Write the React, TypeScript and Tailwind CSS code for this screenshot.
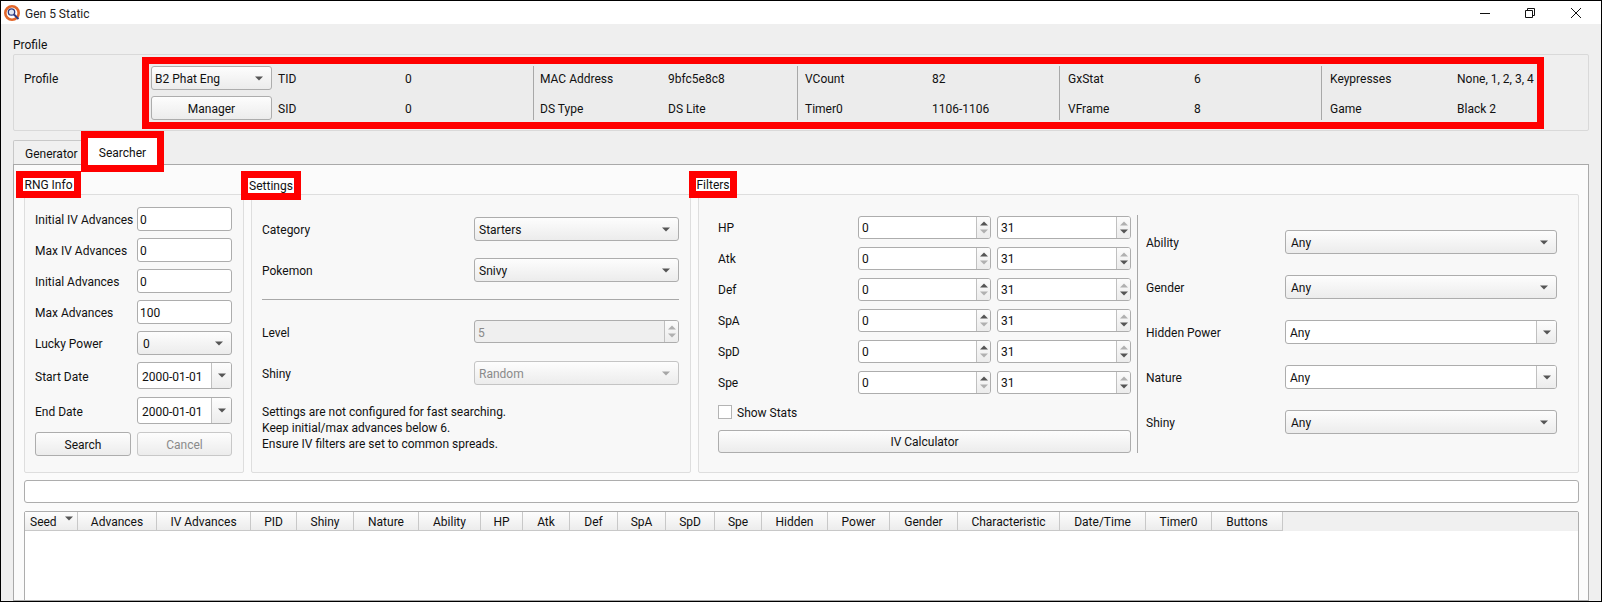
import React from "react";

const Tri = ({ c = "#555555" }: { c?: string }) => (
  <svg width="8" height="5" viewBox="0 0 8 5" className="shrink-0"><path d="M0 0.5h8L4 4.5z" fill={c} /></svg>
);

const Label = ({ children, w, flat }: { children: React.ReactNode; w: string; flat?: boolean }) => (
  <span className={`${w} shrink-0 whitespace-nowrap ${flat ? "" : "pt-[2px]"}`}>{children}</span>
);

function Combo({ value, w, h = "h-6", disabled, pad = "pl-[4px]" }: { value: string; w: string; h?: string; disabled?: boolean; pad?: string }) {
  return (
    <div className={`${w} ${h} shrink-0 flex items-center justify-between ${pad} pr-[8px] rounded-[3px] border border-[#adadad] bg-gradient-to-b from-[#fdfdfd] to-[#ececec] ${disabled ? "text-[#8a8a8a] border-[#c4c4c4]" : ""}`}>
      <span className="pt-[2px]">{value}</span>
      <Tri c={disabled ? "#a6a6a6" : "#555555"} />
    </div>
  );
}

function EditCombo({ value, w, h = "h-6", seg = "w-5" }: { value: string; w: string; h?: string; seg?: string }) {
  return (
    <div className={`${w} ${h} shrink-0 flex items-stretch rounded-[3px] border border-[#adadad] bg-white overflow-hidden`}>
      <span className="flex-1 flex items-center pl-[4px] pt-[2px]">{value}</span>
      <span className={`${seg} flex items-center justify-center border-l border-[#c0c0c0] bg-gradient-to-b from-[#fdfdfd] to-[#ececec]`}><Tri /></span>
    </div>
  );
}

function TextBox({ value }: { value: string }) {
  return (
    <div className="w-[95px] h-6 shrink-0 flex items-center pl-[2px] pt-[2px] rounded-[3px] border border-[#adadad] bg-white">{value}</div>
  );
}

function Btn({ children, w, h = "h-6 pt-[2px]", disabled }: { children: React.ReactNode; w: string; h?: string; disabled?: boolean }) {
  return (
    <div className={`${w} ${h} shrink-0 flex items-center justify-center rounded-[3px] border bg-gradient-to-b from-[#fdfdfd] to-[#ececec] ${disabled ? "text-[#8a8a8a] border-[#c8c8c8]" : "border-[#adadad]"}`}>
      {children}
    </div>
  );
}

function Spin({ value, w, up, down, disabled }: { value: string; w: string; up: string; down: string; disabled?: boolean }) {
  return (
    <div className={`${w} h-[23px] shrink-0 flex items-stretch rounded-[3px] border border-[#adadad] overflow-hidden ${disabled ? "bg-[#efefef] text-[#8a8a8a]" : "bg-white"}`}>
      <span className={`flex-1 flex items-center pl-[3px] ${disabled ? "pt-[2px]" : ""}`}>{value}</span>
      <span className="w-[14px] flex flex-col items-center justify-center gap-[3px] border-l border-[#c0c0c0] bg-gradient-to-b from-[#fbfbfb] to-[#ececec]">
        <svg width="8" height="5" viewBox="0 0 8 5"><path d="M0 4.5h8L4 0.5z" fill={up} /></svg>
        <svg width="8" height="5" viewBox="0 0 8 5"><path d="M0 0.5h8L4 4.5z" fill={down} /></svg>
      </span>
    </div>
  );
}

function Annot({ children, className }: { children: React.ReactNode; className: string }) {
  return (
    <span className={`absolute -top-[24px] border-[7px] border-[#ff0000] bg-white flex items-center justify-center whitespace-nowrap leading-none ${className}`}>
      {children}
    </span>
  );
}

function InfoCol({ rows, lw, vw, cls = "" }: { rows: [string, string][]; lw: string; vw: string; cls?: string }) {
  return (
    <div className={`flex flex-col gap-[6px] pt-[2px] shrink-0 ${cls}`}>
      {rows.map(([a, b]) => (
        <div key={a} className="h-6 flex items-center">
          <Label w={lw}>{a}</Label>
          <Label w={vw}>{b}</Label>
        </div>
      ))}
    </div>
  );
}

const Sep = () => <div className="w-px h-[54px] mt-[2px] shrink-0 bg-[#a8a8a8]" />;

const headers: [string, string][] = [
  ["Advances", "w-[79px]"], ["IV Advances", "w-[94px]"], ["PID", "w-[46px]"], ["Shiny", "w-[57px]"], ["Nature", "w-[65px]"],
  ["Ability", "w-[62px]"], ["HP", "w-[42px]"], ["Atk", "w-[47px]"], ["Def", "w-[48px]"], ["SpA", "w-[48px]"], ["SpD", "w-[49px]"],
  ["Spe", "w-[47px]"], ["Hidden", "w-[66px]"], ["Power", "w-[62px]"], ["Gender", "w-[68px]"], ["Characteristic", "w-[102px]"],
  ["Date/Time", "w-[86px]"], ["Timer0", "w-[66px]"], ["Buttons", "w-[71px]"],
];

const stats = ["HP", "Atk", "Def", "SpA", "SpD", "Spe"];
const D = "#555555";
const L = "#b0b0b0";
const ANY = "pl-[5px]";

export default function App() {
  return (
    <div className="w-[1602px] h-[602px] overflow-hidden border border-black bg-[#efefef] flex flex-col text-[12px] text-[#111111] font-['Roboto',sans-serif]">
      {/* title bar */}
      <div className="h-[23px] shrink-0 bg-white flex items-center">
        <svg width="18" height="18" viewBox="0 0 18 18" className="ml-[2px] shrink-0">
          <circle cx="9" cy="9" r="6.7" fill="none" stroke="#e2662a" strokeWidth="2.6" />
          <circle cx="8.5" cy="8" r="3.2" fill="#dfe6f2" stroke="#2d3a80" strokeWidth="1.3" />
          <path d="M11 10.5l4.5 4.5" stroke="#2d3a80" strokeWidth="2" />
        </svg>
        <span className="ml-[4px] pt-[2px] text-[#222222]">Gen 5 Static</span>
        <div className="ml-auto flex items-center">
          <svg width="12" height="12" viewBox="0 0 12 12" className="mr-[33px]"><path d="M1 6.5h10" stroke="#111111" /></svg>
          <svg width="12" height="12" viewBox="0 0 12 12" className="mr-[34px]"><path d="M1.5 3.5h7v7h-7zM3.5 3.5v-2h7v7h-2" fill="none" stroke="#111111" /></svg>
          <svg width="12" height="12" viewBox="0 0 12 12" className="mr-[19px]"><path d="M1 1l10 10M11 1L1 11" stroke="#111111" /></svg>
        </div>
      </div>

      <div className="flex-1 min-h-0 flex flex-col px-[12px]">
        <div className="h-[30px] shrink-0 flex items-center pt-[11px]">Profile</div>

        {/* profile group */}
        <div className="h-[77px] shrink-0 flex rounded-[2px] border border-[#d9d9d9]">
          <div className="w-[128px] shrink-0 pl-[10px] pt-[15px]">Profile</div>
          <div className="w-[1402px] h-[72px] mt-[2px] shrink-0 border-[7px] border-[#ff0000] flex bg-[#ececec]">
            <div className="w-[129px] pl-[2px] pt-[2px] flex flex-col gap-[6px] shrink-0">
              <Combo value="B2 Phat Eng" w="w-[121px]" pad="pl-[3px]" />
              <Btn w="w-[121px]">Manager</Btn>
            </div>
            <InfoCol rows={[["TID", "0"], ["SID", "0"]]} lw="w-[127px]" vw="w-[128px]" />
            <Sep />
            <InfoCol rows={[["MAC Address", "9bfc5e8c8"], ["DS Type", "DS Lite"]]} lw="w-[128px]" vw="w-[129px]" cls="pl-[6px]" />
            <Sep />
            <InfoCol rows={[["VCount", "82"], ["Timer0", "1106-1106"]]} lw="w-[127px]" vw="w-[127px]" cls="pl-[7px]" />
            <Sep />
            <InfoCol rows={[["GxStat", "6"], ["VFrame", "8"]]} lw="w-[126px]" vw="w-[127px]" cls="pl-[8px]" />
            <Sep />
            <InfoCol rows={[["Keypresses", "None, 1, 2, 3, 4"], ["Game", "Black 2"]]} lw="w-[127px]" vw="w-[80px]" cls="pl-[8px]" />
          </div>
        </div>

        {/* tabs */}
        <div className="h-[26px] mt-[7px] shrink-0 flex items-end relative z-10">
          <div className="w-[75px] h-6 flex items-center pl-[11px] pt-[2px] border border-b-0 border-[#c8c8c8] rounded-t-[2px] bg-[#f0f0f0]">Generator</div>
          <div className="relative w-[69px] h-[27px] -mb-px flex items-center justify-center pt-[2px] bg-white">
            Searcher
            <div className="absolute -inset-[7px] border-[7px] border-[#ff0000]" />
          </div>
        </div>

        {/* pane */}
        <div className="flex-1 min-h-0 border border-[#a9a9a9] bg-[#fbfbfb] pl-[10px] pr-[9px] pt-[29px] overflow-hidden">
          <div className="flex gap-[7px] h-[279px]">
            {/* RNG */}
            <div className="relative w-[220px] shrink-0 rounded-[2px] border border-[#dedede] bg-[#f8f8f8] pl-[10px] pt-[12px]">
              <Annot className="-left-[9px] w-[65px] h-[27px]">RNG Info</Annot>
              <div className="flex flex-col gap-[7px]">
                {[["Initial IV Advances", "0"], ["Max IV Advances", "0"], ["Initial Advances", "0"], ["Max Advances", "100"]].map(([a, b]) => (
                  <div key={a} className="h-6 flex items-center"><Label w="w-[102px]">{a}</Label><TextBox value={b} /></div>
                ))}
                <div className="h-6 flex items-center"><Label w="w-[102px]">Lucky Power</Label><Combo value="0" w="w-[95px]" pad={ANY} /></div>
                <div className="h-[27px] flex items-center"><Label w="w-[102px]">Start Date</Label><EditCombo value="2000-01-01" w="w-[95px]" h="h-[27px]" /></div>
                <div className="h-[27px] mt-px flex items-center"><Label w="w-[102px]">End Date</Label><EditCombo value="2000-01-01" w="w-[95px]" h="h-[27px]" /></div>
                <div className="h-6 mt-px flex gap-[6px]"><Btn w="w-[96px]">Search</Btn><Btn w="w-[95px]" disabled>Cancel</Btn></div>
              </div>
            </div>

            {/* Settings */}
            <div className="relative w-[440px] shrink-0 rounded-[2px] border border-[#dedede] bg-[#f8f8f8] pl-[10px] pt-[22px]">
              <Annot className="-left-[11px] w-[60px] h-[29px]">Settings</Annot>
              <div className="h-6 flex items-center"><Label w="w-[212px]">Category</Label><Combo value="Starters" w="w-[205px]" /></div>
              <div className="h-6 mt-[17px] flex items-center"><Label w="w-[212px]">Pokemon</Label><Combo value="Snivy" w="w-[205px]" /></div>
              <div className="h-px w-[417px] mt-[17px] bg-[#a8a8a8]" />
              <div className="h-[23px] mt-[20px] flex items-center"><Label w="w-[212px]">Level</Label><Spin value="5" w="w-[205px]" up={L} down={L} disabled /></div>
              <div className="h-6 mt-[18px] flex items-center"><Label w="w-[212px]">Shiny</Label><Combo value="Random" w="w-[205px]" disabled /></div>
              <div className="mt-[19px] leading-[16px]">
                <div>Settings are not configured for fast searching.</div>
                <div>Keep initial/max advances below 6.</div>
                <div>Ensure IV filters are set to common spreads.</div>
              </div>
            </div>

            {/* Filters */}
            <div className="relative w-[881px] shrink-0 rounded-[2px] border border-[#dedede] bg-[#f8f8f8] pl-[19px] flex">
              <Annot className="-left-[10px] w-[48px] h-[27px]">Filters</Annot>
              <div className="w-[413px] shrink-0 pt-[21px] flex flex-col">
                <div className="flex flex-col gap-[8px]">
                  {stats.map((s) => (
                    <div key={s} className="h-[23px] flex items-center">
                      <Label w="w-[140px]" flat>{s}</Label>
                      <Spin value="0" w="w-[133px]" up={D} down={L} />
                      <div className="w-[6px] shrink-0" />
                      <Spin value="31" w="w-[134px]" up={L} down={D} />
                    </div>
                  ))}
                </div>
                <div className="h-[14px] mt-[11px] flex items-center">
                  <span className="w-[14px] h-[14px] shrink-0 border border-[#b4b4b4] bg-white" />
                  <span className="ml-[5px] pt-[2px]">Show Stats</span>
                </div>
                <Btn w="w-[413px]" h="h-[23px] mt-[11px]">IV Calculator</Btn>
              </div>
              <div className="w-px h-[238px] mt-[20px] ml-[6px] shrink-0 bg-[#a8a8a8]" />
              <div className="ml-[8px] pt-[35px] flex flex-col gap-[21px]">
                <div className="h-6 flex items-center"><Label w="w-[139px]">Ability</Label><Combo value="Any" w="w-[272px]" pad={ANY} /></div>
                <div className="h-6 flex items-center"><Label w="w-[139px]">Gender</Label><Combo value="Any" w="w-[272px]" pad={ANY} /></div>
                <div className="h-6 flex items-center"><Label w="w-[139px]">Hidden Power</Label><EditCombo value="Any" w="w-[272px]" /></div>
                <div className="h-6 flex items-center"><Label w="w-[139px]">Nature</Label><EditCombo value="Any" w="w-[272px]" /></div>
                <div className="h-6 flex items-center"><Label w="w-[139px]">Shiny</Label><Combo value="Any" w="w-[272px]" pad={ANY} /></div>
              </div>
            </div>
          </div>

          <div className="h-[23px] mt-[7px] rounded-[3px] border border-[#adadad] bg-white" />

          <div className="h-[200px] mt-[8px] rounded-t-[2px] border border-[#adadad] bg-white">
            <div className="h-[19px] flex bg-[#f0f0f0]">
              <div className="w-[53px] shrink-0 flex items-center justify-between pl-[5px] pr-[4px] pt-[2px] border-b border-r border-[#c8c8c8] bg-gradient-to-b from-[#fdfdfd] to-[#ececec]">
                <span>Seed</span><span className="-mt-[7px] flex"><Tri /></span>
              </div>
              {headers.map(([h, w]) => (
                <div key={h} className={`${w} shrink-0 flex items-center justify-center pt-[2px] border-b border-r border-[#c8c8c8] bg-gradient-to-b from-[#fdfdfd] to-[#ececec]`}>{h}</div>
              ))}
            </div>
          </div>
        </div>
      </div>
    </div>
  );
}
